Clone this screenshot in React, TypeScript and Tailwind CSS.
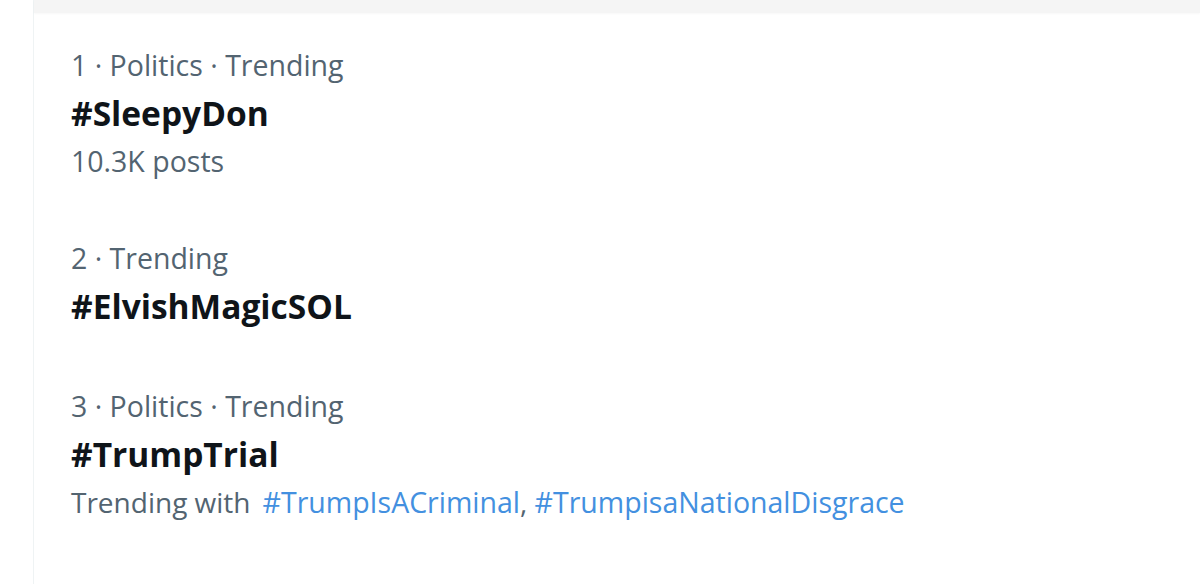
import * as React from "react"

type Trend = {
  id: number
  meta: string
  title: string
  posts?: string
  with?: string[]
  pad: string
}

const trends: Trend[] = [
  { id: 1, meta: "1 · Politics · Trending", title: "#SleepyDon", posts: "10.3K posts", pad: "pt-[28px] pb-[24px]" },
  { id: 2, meta: "2 · Trending", title: "#ElvishMagicSOL", pad: "pt-[25px] pb-[24px]" },
  {
    id: 3,
    meta: "3 · Politics · Trending",
    title: "#TrumpTrial",
    with: ["#TrumpIsACriminal", "#TrumpisaNationalDisgrace"],
    pad: "pt-[28px] pb-[24px]",
  },
]

function TrendItem({ trend }: { trend: Trend }) {
  return (
    <div className={`flex flex-col px-[37px] ${trend.pad}`}>
      <span className="text-[28.5px] leading-[48px] text-[#536471]">{trend.meta}</span>
      <span className="text-[33.5px] leading-[48px] font-bold text-[#0f1419]">{trend.title}</span>
      {trend.posts ? <span className="text-[28.5px] leading-[48px] text-[#536471]">{trend.posts}</span> : null}
      {trend.with ? (
        <span className="text-[28px] leading-[48px] text-[#536471]">
          Trending with
          {trend.with.map((tag, i) => (
            <React.Fragment key={tag}>
              {i > 0 ? ", " : <span className="inline-block w-[12px]" />}
              <span className="text-[28.5px] text-[#4390e0]">{tag}</span>
            </React.Fragment>
          ))}
        </span>
      ) : null}
    </div>
  )
}

export default function App() {
  return (
    <div className="flex h-[584px] w-full overflow-hidden bg-white" style={{ fontFamily: '"Open Sans", sans-serif' }}>
      <div className="w-[33px] shrink-0 bg-white" />
      <div className="flex flex-1 flex-col border-l border-[#eff3f4]">
        <div className="h-[13px] shrink-0 bg-[#f5f5f5] shadow-[0_1px_2px_rgba(0,0,0,0.03)]" />
        <div className="flex flex-col">
          {trends.map((trend) => (
            <TrendItem key={trend.id} trend={trend} />
          ))}
        </div>
      </div>
    </div>
  )
}
